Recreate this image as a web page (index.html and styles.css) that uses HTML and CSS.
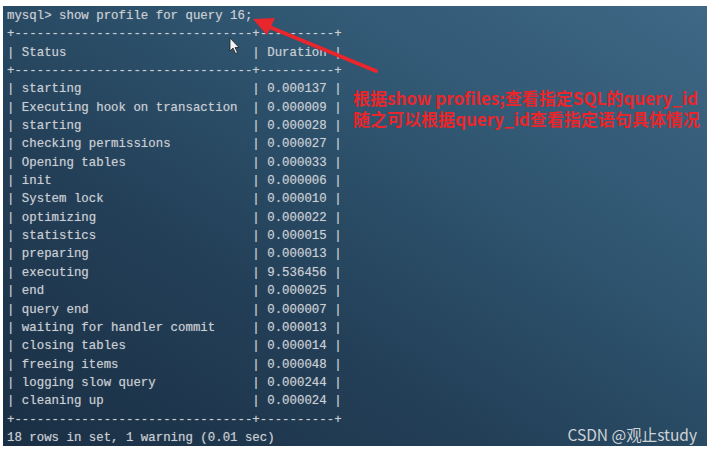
FILE: index.html
```html
<!DOCTYPE html>
<html lang="zh">
<head>
<meta charset="utf-8">
<link rel="stylesheet" href="styles.css">
</head>
<body>
<div class="screen">
<pre class="term">mysql&gt; show profile for query 16;
+--------------------------------+----------+
| Status                         | Duration |
+--------------------------------+----------+
| starting                       | 0.000137 |
| Executing hook on transaction  | 0.000009 |
| starting                       | 0.000028 |
| checking permissions           | 0.000027 |
| Opening tables                 | 0.000033 |
| init                           | 0.000006 |
| System lock                    | 0.000010 |
| optimizing                     | 0.000022 |
| statistics                     | 0.000015 |
| preparing                      | 0.000013 |
| executing                      | 9.536456 |
| end                            | 0.000025 |
| query end                      | 0.000007 |
| waiting for handler commit     | 0.000013 |
| closing tables                 | 0.000014 |
| freeing items                  | 0.000048 |
| logging slow query             | 0.000244 |
| cleaning up                    | 0.000024 |
+--------------------------------+----------+
18 rows in set, 1 warning (0.01 sec)</pre>
<div class="note">
<p>根据show profiles;查看指定SQL的query_id</p>
<p>随之可以根据query_id查看指定语句具体情况</p>
</div>
<svg class="arrow" width="140" height="70" viewBox="0 0 140 70">
<line x1="127" y1="63" x2="18" y2="18" stroke="#e8262b" stroke-width="4" stroke-linecap="round"/>
<polygon points="4,11 26,10 18,27" fill="#e8262b"/>
</svg>
<svg class="cursor" width="12" height="18" viewBox="0 0 12 18">
<path d="M1 1 L1 14 L4 11 L6.5 16.5 L8.5 15.5 L6 10.5 L10 10.5 Z" fill="#f2f4f6" stroke="#222" stroke-width="0.8"/>
</svg>
<div class="mark">CSDN @观止study</div>
</div>
</body>
</html>
```
FILE: styles.css
```css
html, body {
  margin: 0;
  padding: 0;
  background: #ffffff;
}
.screen {
  position: relative;
  margin: 6px 4px 0 3px;
  height: 440px;
  overflow: hidden;
  background: linear-gradient(to top right, #1a2f44 0%, #233f57 35%, #2f5570 65%, #3e6886 100%);
}
.term {
  margin: 0;
  padding: 1px 0 0 4px;
  font-family: "Liberation Mono", "DejaVu Sans Mono", monospace;
  font-size: 12.4px;
  line-height: 18.35px;
  color: #c9ced3;
  text-shadow: 0 0 1px rgba(200, 206, 212, 0.5);
}
.note {
  position: absolute;
  left: 350px;
  top: 81px;
  font-family: "Noto Sans CJK SC", "Noto Sans", sans-serif;
  font-weight: 700;
  font-size: 17px;
  line-height: 21px;
  color: #e8262b;
}
.note p {
  margin: 0;
  white-space: nowrap;
}
.arrow {
  position: absolute;
  left: 246px;
  top: 2px;
}
.cursor {
  position: absolute;
  left: 226px;
  top: 31px;
}
.mark {
  position: absolute;
  right: 10px;
  bottom: 1px;
  font-family: "Noto Sans CJK SC", "Noto Sans", sans-serif;
  font-size: 15.5px;
  color: #cfd3d6;
}
```
